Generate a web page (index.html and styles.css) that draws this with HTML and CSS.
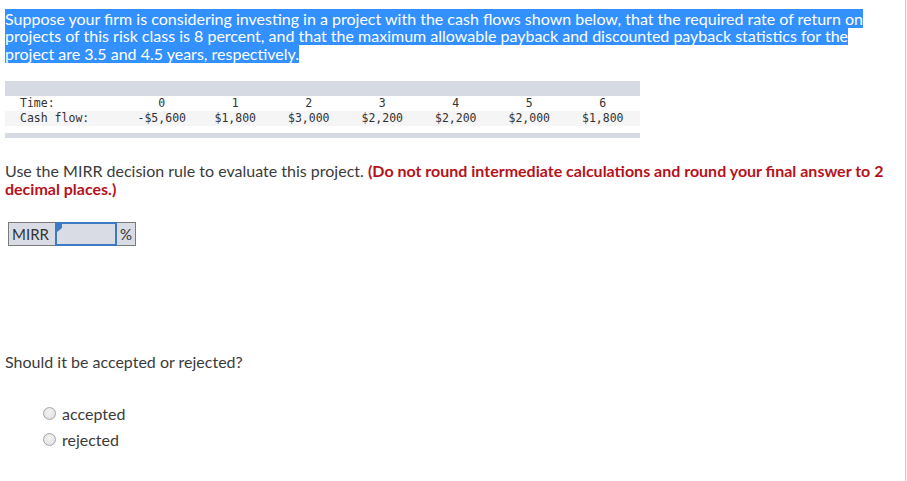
FILE: index.html
```html
<!DOCTYPE html>
<html>
<head>
<meta charset="utf-8">
<link rel="stylesheet" href="styles.css">
</head>
<body>
<div class="page">
  <p class="intro"><span class="sel"><span class="sel-text">Suppose your firm is considering investing in a project with the cash flows shown below, that the required rate of return on projects of this risk class is 8 percent, and that the maximum allowable payback and discounted payback statistics for the project are 3.5 and 4.5 years, respectively.</span></span></p>

  <div class="cf">
    <div class="band"></div>
    <div class="row">
      <span class="lab">Time:</span>
      <span>0</span><span>1</span><span>2</span><span>3</span><span>4</span><span>5</span><span>6</span>
    </div>
    <div class="row alt">
      <span class="lab">Cash flow:</span>
      <span>-$5,600</span><span>$1,800</span><span>$3,000</span><span>$2,200</span><span>$2,200</span><span>$2,000</span><span>$1,800</span>
    </div>
    <div class="band thin"></div>
  </div>

  <p class="instr">Use the MIRR decision rule to evaluate this project. <strong class="warn">(Do not round intermediate calculations and round your final answer to 2 decimal places.)</strong></p>

  <div class="answer">
    <span class="cell lbl">MIRR</span>
    <span class="cell inp"><span class="flag"></span></span>
    <span class="cell unit">%</span>
  </div>

  <p class="ask">Should it be accepted or rejected?</p>

  <div class="choices">
    <label class="choice"><input type="radio" name="d"> accepted</label>
    <label class="choice"><input type="radio" name="d"> rejected</label>
  </div>
</div>
</body>
</html>
```

FILE: styles.css
```css
html, body {
  margin: 0;
  padding: 0;
}
body {
  background: #f7f7f7;
  font-family: Lato, "Open Sans", sans-serif;
  color: #3b3b3b;
}
.page {
  box-sizing: border-box;
  width: 906px;
  min-height: 481px;
  background: #fff;
  border-right: 1px solid #cccccc;
  padding: 10px 0 0 5px;
}
.intro {
  margin: 0;
  width: 895px;
  font-size: 16px;
  line-height: 17.3px;
}
.sel {
  background: #3391ff;
  color: #fff;
}
.sel-text {
  position: relative;
}
.cf {
  width: 635px;
  margin-top: 19px;
  font-family: "DejaVu Sans Mono", "Liberation Mono", monospace;
  font-size: 11.5px;
  color: #333;
}
.band {
  height: 15px;
  background: #d6dae3;
}
.band.thin {
  height: 5px;
  margin-top: 7px;
}
.row {
  display: grid;
  grid-template-columns: 120px repeat(7, 73.5px);
  height: 15px;
  line-height: 15px;
  text-align: center;
}
.row.alt {
  background: #f5f5f5;
}
.row .lab {
  text-align: left;
  padding-left: 15px;
}
.instr {
  margin: 24px 0 0;
  width: 895px;
  font-size: 16px;
  line-height: 18px;
}
.warn {
  color: #b5121b;
  font-weight: 700;
}
.answer {
  display: flex;
  margin: 24px 0 0 3px;
  height: 24px;
}
.cell {
  box-sizing: border-box;
  height: 24px;
  background: #d9dce5;
  border: 1px solid #7b7b7b;
  font-size: 15px;
  line-height: 22px;
  color: #333;
}
.lbl {
  width: 48px;
  padding-left: 3px;
}
.inp {
  position: relative;
  width: 62px;
  border: 2px solid #3e79c4;
  margin-left: -1px;
}
.flag {
  position: absolute;
  left: 0;
  top: 0;
  width: 0;
  height: 0;
  border-top: 4px solid #3e79c4;
  border-bottom: 4px solid transparent;
  border-left: 5px solid #3e79c4;
  border-right: 0;
}
.unit {
  width: 20px;
  margin-left: -1px;
  padding-left: 3px;
}
.ask {
  margin: 107px 0 0;
  font-size: 16px;
  line-height: 18px;
}
.choices {
  display: flex;
  flex-direction: column;
  gap: 8px;
  margin: 34px 0 0 38px;
}
.choice {
  display: flex;
  align-items: center;
  gap: 6px;
  font-size: 16px;
  line-height: 18px;
}
.choice input {
  appearance: none;
  -webkit-appearance: none;
  margin: 0;
  width: 13px;
  height: 13px;
  border-radius: 50%;
  border: 1px solid #a6a6a6;
  background: radial-gradient(circle at 50% 40%, #f4f4f4 0%, #dcdcdc 100%);
  box-sizing: border-box;
}
```
